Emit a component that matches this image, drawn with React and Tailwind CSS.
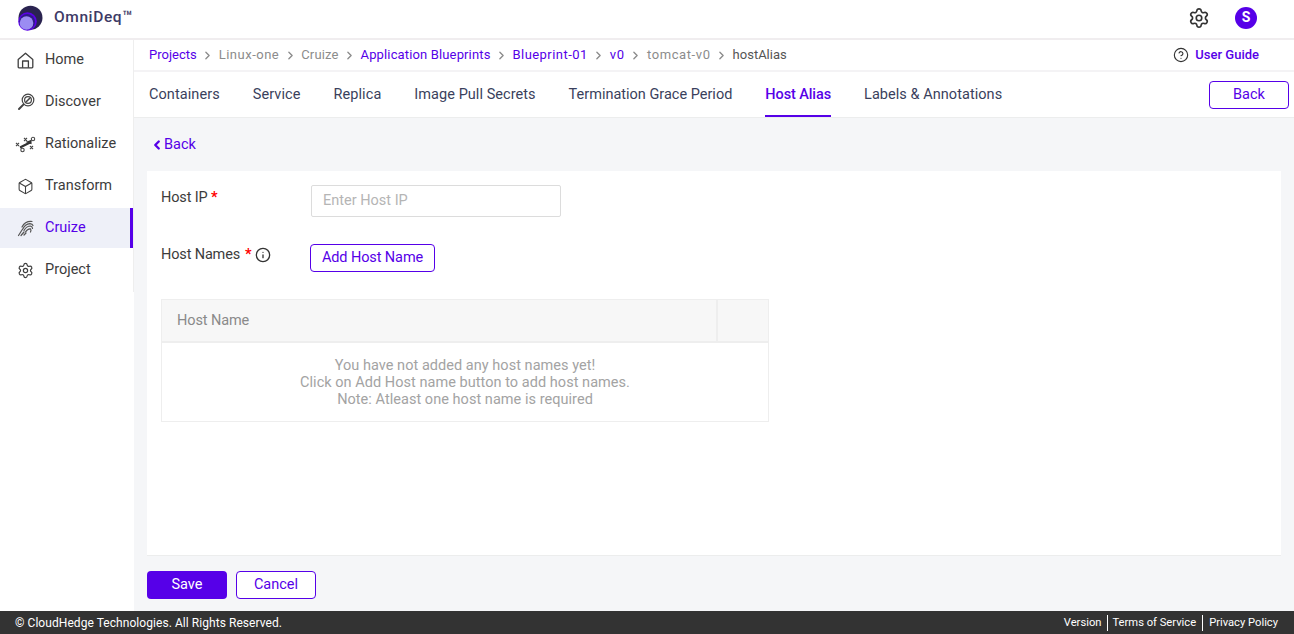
import React from "react";
import { Box, Settings, CircleHelp, Info, ChevronRight, ChevronLeft } from "lucide-react";

const font = "font-['Roboto',sans-serif]";

const HomeIcon = () => (
  <svg width="17" height="17" viewBox="0 0 17 17" fill="none" stroke="#3f3f3f" strokeWidth="1.3" strokeLinejoin="round">
    <path d="M1.2 7.6 L8.5 1.3 L15.8 7.6 V15 Q15.8 15.8 15 15.8 H2 Q1.2 15.8 1.2 15 Z" />
    <path d="M5.6 15.8 V9 H11.4 V15.8" />
  </svg>
);

const DiscoverIcon = () => (
  <svg width="18" height="18" viewBox="0 0 18 18" fill="none" stroke="#444" strokeWidth="1.2">
    <circle cx="11" cy="7" r="5.8" />
    <circle cx="11" cy="7" r="3.4" />
    <path d="M9 9 L13 5" strokeWidth="1.6" />
    <path d="M6.6 11.4 L2 16" strokeWidth="2" strokeLinecap="round" />
  </svg>
);

const RationalizeIcon = () => (
  <svg width="21" height="17" viewBox="0 0 21 17" fill="none" stroke="#4a4a4a" strokeWidth="1.1" className="-ml-[2px]">
    <path d="M1 7l3 3M4 7l-3 3M9 2l3 3M12 2l-3 3M15 10l3 3M18 10l-3 3" />
    <circle cx="18" cy="3" r="1.7" />
    <circle cx="7.5" cy="14" r="1.7" />
    <path d="M5 11.5L15 6.5" stroke="#333" strokeWidth="2.2" />
    <path d="M12 6l4-1.5v3z" fill="#333" stroke="#333" />
  </svg>
);

const CruizeIcon = () => (
  <svg width="18" height="18" viewBox="0 0 18 18" fill="none" stroke="#555" strokeWidth="1.2" strokeLinecap="round">
    <path d="M5 8 Q8 2 15 2.5" />
    <path d="M5.5 10.5 Q8 5 13 4.6 Q15.5 4.8 16 6.5" />
    <path d="M7 11.5 Q9.5 7 13.5 7 Q15.5 7.5 15.5 9.5" />
    <path d="M8.5 13 Q10.5 9.5 13.5 9.8 Q14.5 11 13.5 13" />
    <path d="M1.5 16.5 L5 11" />
    <path d="M4 16.5 L7 13" />
    <path d="M7 16 L9 14" />
  </svg>
);

const Logo = () => (
  <svg width="26" height="26" viewBox="0 0 26 26">
    <circle cx="13.5" cy="12.8" r="12" fill="#2a2350" />
    <circle cx="10.5" cy="16.5" r="9.3" fill="#5a00e8" />
    <circle cx="10.2" cy="16.8" r="7.8" fill="#2f1a86" />
    <circle cx="9.5" cy="18" r="6.8" fill="#9b8cf2" />
  </svg>
);

const navItems = [
  { label: "Home", icon: <HomeIcon /> },
  { label: "Discover", icon: <DiscoverIcon /> },
  { label: "Rationalize", icon: <RationalizeIcon /> },
  { label: "Transform", icon: <Box size={17} strokeWidth={1.5} color="#3f3f3f" /> },
  { label: "Cruize", icon: <CruizeIcon />, active: true },
  { label: "Project", icon: <Settings size={17} strokeWidth={1.7} color="#3f3f3f" /> },
];

const crumbs = [
  { t: "Projects", cls: "text-[#5600e8]" },
  { t: "Linux-one", cls: "text-[#8c8c8c] tracking-[0.5px]" },
  { t: "Cruize", cls: "text-[#8c8c8c] tracking-[0.15px]" },
  { t: "Application Blueprints", cls: "text-[#5600e8] tracking-[0.14px]" },
  { t: "Blueprint-01", cls: "text-[#5600e8] tracking-[0.45px]" },
  { t: "v0", cls: "text-[#5600e8] tracking-[0.8px]" },
  { t: "tomcat-v0", cls: "text-[#8c8c8c] tracking-[0.6px]" },
  { t: "hostAlias", cls: "text-[#555]" },
];

const tabs = [
  { t: "Containers", cls: "tracking-[0.08px] text-[#3a3f5c] border-transparent" },
  { t: "Service", cls: "tracking-[0.08px] text-[#3a3f5c] border-transparent" },
  { t: "Replica", cls: "tracking-[0.08px] text-[#3a3f5c] border-transparent" },
  { t: "Image Pull Secrets", cls: "tracking-[0.05px] text-[#3a3f5c] border-transparent" },
  { t: "Termination Grace Period", cls: "text-[#3a3f5c] border-transparent" },
  { t: "Host Alias", cls: "tracking-[-0.1px] font-medium text-[#5600e8] border-[#5600e8]" },
  { t: "Labels & Annotations", cls: "tracking-[0.05px] text-[#3a3f5c] border-transparent" },
];

const App = () => {
  return (
    <div className={`${font} w-[1294px] h-[634px] flex flex-col overflow-hidden bg-white text-[14.5px]`}>
      <header className="h-10 shrink-0 flex items-center border-b-2 border-[#f0edef] bg-white">
        <div className="ml-[17px] mb-[3px]"><Logo /></div>
        <span className="ml-[11px] mb-[3px] font-medium text-[15.5px] tracking-[0.6px] text-[#3d3a66]">
          OmniDeq<span className="text-[16px] tracking-normal">™</span>
        </span>
        <div className="ml-auto flex items-center mr-[37px] gap-[25px] mb-[3px]">
          <Settings size={22} strokeWidth={1.8} color="#333" />
          <div className="w-[22px] h-[22px] rounded-full bg-[#5600e8] text-white text-[14px] font-bold flex items-center justify-center">S</div>
        </div>
      </header>

      <div className="flex flex-1 min-h-0">
        <aside className="w-[134px] shrink-0 bg-white">
          <nav className="border-r border-[#eeeeee] h-[252px] flex flex-col gap-[2px]">
            {navItems.map((n) => (
              <div
                key={n.label}
                className={`h-10 shrink-0 flex items-center relative ${n.active ? "bg-[#eef0f8] text-[#5600e8]" : "text-[#3c3c3c]"}`}
              >
                <span className="w-[45px] pl-[17px] flex items-center shrink-0">{n.icon}</span>
                <span>{n.label}</span>
                {n.active && <span className="absolute right-0 top-0 bottom-0 w-[3px] bg-[#5600e8]" />}
              </div>
            ))}
          </nav>
        </aside>

        <main className="flex-1 min-w-0 flex flex-col bg-[#f5f6f8]">
          <div className="h-8 shrink-0 bg-white border-b-2 border-[#f4f3f5] flex items-center pl-[15px] pr-[35px] text-[13px]">
            {crumbs.map((c, i) => (
              <React.Fragment key={c.t}>
                <span className={c.cls}>{c.t}</span>
                {i < crumbs.length - 1 && <ChevronRight size={13} strokeWidth={2.5} color="#8c8c8c" className="mx-[4.5px]" />}
              </React.Fragment>
            ))}
            <div className="ml-auto flex items-center gap-[6px] text-[#5600e8] font-medium">
              <CircleHelp size={16} strokeWidth={1.7} color="#333" />
              User Guide
            </div>
          </div>

          <div className="h-[46px] shrink-0 bg-white border-b border-[#eceded] flex items-center pl-[15px] pr-[5px]">
            <div className="flex gap-[33px] h-full">
              {tabs.map((tab) => (
                <div key={tab.t} className={`h-full flex items-center pt-[2px] border-b-2 ${tab.cls}`}>
                  {tab.t}
                </div>
              ))}
            </div>
            <button className="ml-auto w-[80px] h-7 rounded-[4px] border border-[#5600e8] text-[#5600e8] bg-white">Back</button>
          </div>

          <div className="flex-1 min-h-0 flex flex-col pl-[13px] pr-[13px]">
            <div className="h-[53px] shrink-0 flex items-center pl-[3px] text-[#5600e8]">
              <ChevronLeft size={14} strokeWidth={4} />
              Back
            </div>
            <section className="h-[385px] shrink-0 bg-white border-b border-[#eceded] pl-[14px] pt-[14px]">
              <div className="flex h-8">
                <label className="w-[150px] text-[#3c3c3c] pt-[2px] tracking-[-0.15px]">Host IP <span className="text-[#ff0000] font-bold">*</span></label>
                <input
                  placeholder="Enter Host IP"
                  className="w-[250px] h-8 border border-[#dcdcdc] rounded-[2px] px-[11px] pb-[2px] outline-none placeholder:text-[#b5b5b5]"
                />
              </div>
              <div className="flex items-start mt-[27px]">
                <label className="w-[149px] text-[#3c3c3c] flex items-center h-[22px] tracking-[-0.15px]">
                  <span>Host Names</span>
                  <span className="text-[#ff0000] font-bold ml-[5px]">*</span>
                  <Info size={16} strokeWidth={2} color="#333" className="ml-[3px]" />
                </label>
                <button className="h-7 w-[125px] border border-[#5600e8] rounded-[4px] text-[#5600e8] bg-white tracking-[-0.1px]">Add Host Name</button>
              </div>
              <div className="w-[608px] mt-[27px] border border-[#eeeeee]">
                <div className="flex h-[43px] bg-[#f7f7f7] border-b-2 border-[#eeeeee]">
                  <div className="flex-1 flex items-center pl-[15px] text-[#8a8a8a] border-r-2 border-[#eeeeee] tracking-[-0.1px]">Host Name</div>
                  <div className="w-[50px]" />
                </div>
                <div className="h-[78px] flex flex-col items-center justify-center text-[#a3a3a3] leading-[17px] tracking-[0.04px]">
                  <p>You have not added any host names yet!</p>
                  <p>Click on Add Host name button to add host names.</p>
                  <p>Note: Atleast one host name is required</p>
                </div>
              </div>
            </section>
            <div className="flex gap-[9px] mt-[15px]">
              <button className="w-20 h-7 rounded-[4px] bg-[#5600e8] text-white">Save</button>
              <button className="w-20 h-7 rounded-[4px] border border-[#5600e8] bg-white text-[#5600e8]">Cancel</button>
            </div>
          </div>
        </main>
      </div>

      <footer className="h-[23px] shrink-0 bg-[#333333] text-white flex items-center pl-[15px] pr-4">
        <span className="text-[12px] tracking-[0.06px]">© CloudHedge Technologies. All Rights Reserved.</span>
        <div className="ml-auto flex items-center text-[11.2px]">
          <span className="pr-[6px] border-r border-white leading-[16px]">Version</span>
          <span className="pl-[4px] pr-[6px] border-r border-white leading-[16px]">Terms of Service</span>
          <span className="pl-[6px] leading-[16px]">Privacy Policy</span>
        </div>
      </footer>
    </div>
  );
};

export default App;
